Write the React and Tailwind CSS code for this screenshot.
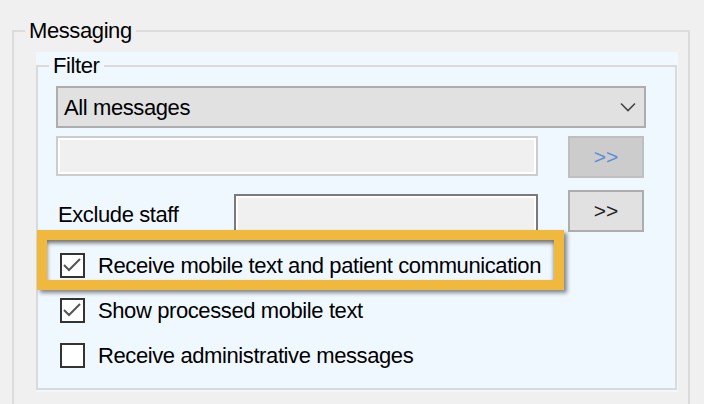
import { useState } from "react";

const FONT = { fontFamily: '"Liberation Sans", Arial, sans-serif' };

function Check({ checked, onToggle, label }) {
  return (
    <button
      type="button"
      onClick={onToggle}
      className="flex items-center h-[45px] pl-[4px] text-left"
    >
      <span className="w-[25px] h-[25px] border-2 border-[#333333] bg-[#ffffff] flex items-center justify-center shrink-0">
        {checked && (
          <svg width="21" height="21" viewBox="0 0 21 21">
            <polyline
              points="2,10 7,15 18,4"
              fill="none"
              stroke="#555555"
              strokeWidth="2"
            />
          </svg>
        )}
      </span>
      <span className="ml-[13px] text-[22px] tracking-[-0.4px] text-black leading-[26px] whitespace-nowrap">
        {label}
      </span>
    </button>
  );
}

export default function App() {
  const [opts, setOpts] = useState({ receive: true, processed: true, admin: false });
  const toggle = (k) => setOpts((o) => ({ ...o, [k]: !o[k] }));

  return (
    <div
      className="w-[704px] h-[404px] overflow-hidden bg-[#f0f0f0] pl-[12px] pt-[18px] text-black"
      style={FONT}
    >
      {/* Messaging group */}
      <fieldset className="w-[678px] h-[440px] border-2 border-[#dcdcdc]">
        <legend className="ml-[11px] px-[4px] text-[22px] tracking-[-0.4px] leading-[26px]">
          Messaging
        </legend>

        <div className="ml-[22px] mt-[8px] w-[642px] h-[340px] bg-[#f0f8ff]">
          {/* Filter group */}
          <fieldset className="w-[641px] h-[338px] border-2 border-[#dadada]">
            <legend className="ml-[11px] px-[4px] text-[22px] tracking-[-0.4px] leading-[27px]">
              Filter
            </legend>

            <div className="px-[18px] pt-[7px]">
              {/* dropdown */}
              <div className="w-[590px] h-[42px] border-2 border-[#adadad] bg-[#e1e1e1] flex items-center justify-between pl-[6px] pr-[8px]">
                <span className="text-[22px] tracking-[-0.4px]">All messages</span>
                <svg width="16" height="10" viewBox="0 0 16 10">
                  <polyline points="1,1.5 8,8.5 15,1.5" fill="none" stroke="#444444" strokeWidth="1.6" />
                </svg>
              </div>

              {/* disabled row */}
              <div className="flex items-start mt-[8px]">
                <div className="w-[482px] h-[40px] border-2 border-[#cccccc] bg-[#f0f0f0] shadow-[inset_0_0_0_2px_#ffffff]" />
                <div className="ml-[30px] w-[76px] h-[42px] border-2 border-[#bfbfbf] bg-[#cccccc] flex items-center justify-center text-[21px] text-[#5b8dd6]">
                  &gt;&gt;
                </div>
              </div>

              {/* exclude staff */}
              <div className="flex items-start mt-[12px] h-[44px]">
                <div className="flex items-center mt-[4px] h-[40px]">
                  <span className="w-[178px] pl-[2px] text-[22px] tracking-[-0.4px]">Exclude staff</span>
                  <div className="w-[304px] h-[40px] border-2 border-[#7a7a7a] bg-[#f0f0f0] shadow-[inset_0_0_0_2px_#ffffff]" />
                </div>
                <div className="ml-[30px] w-[76px] h-[42px] border-2 border-[#adadad] bg-[#e1e1e1] flex items-center justify-center text-[21px] text-[#222222]">
                  &gt;&gt;
                </div>
              </div>

              {/* checkboxes */}
              <div className="mt-[9px] flex flex-col items-start">
                <div className="relative">
                  <Check
                    checked={opts.receive}
                    onToggle={() => toggle("receive")}
                    label="Receive mobile text and patient communication"
                  />
                  {/* highlight callout */}
                  <div className="absolute left-[-19px] top-[-13px] w-[527px] h-[60px] border-[10px] border-[#f0b93e] pointer-events-none shadow-[3px_3px_4px_rgba(0,0,0,0.45),inset_0_3px_4px_rgba(0,0,0,0.55)]" />
                </div>
                <Check
                  checked={opts.processed}
                  onToggle={() => toggle("processed")}
                  label="Show processed mobile text"
                />
                <Check
                  checked={opts.admin}
                  onToggle={() => toggle("admin")}
                  label="Receive administrative messages"
                />
              </div>
            </div>
          </fieldset>
        </div>
      </fieldset>
    </div>
  );
}
